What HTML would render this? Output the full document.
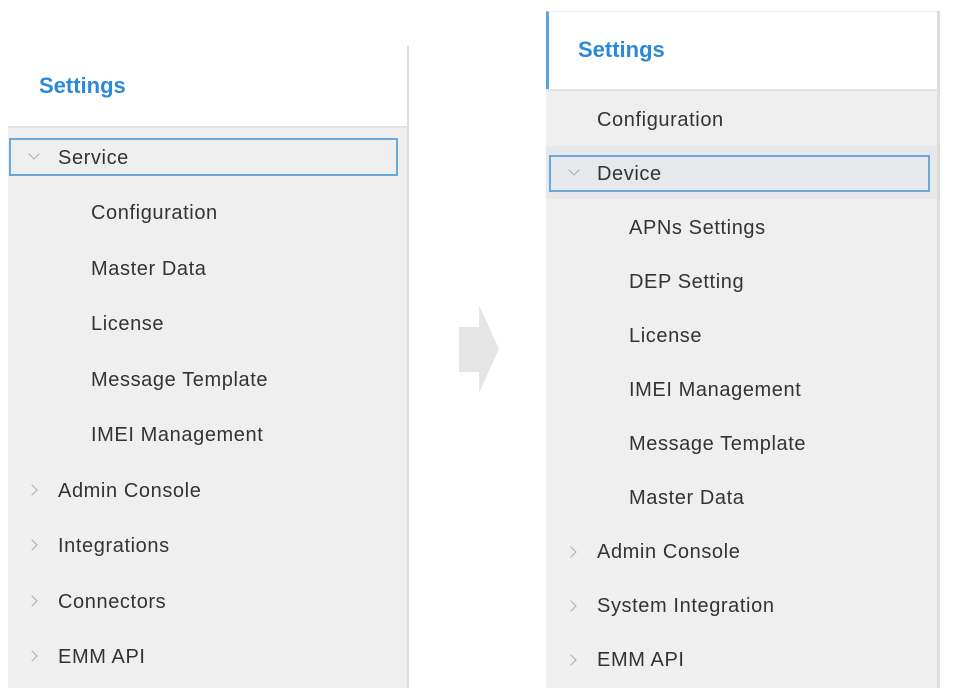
<!DOCTYPE html>
<html><head><meta charset="utf-8"><style>
body{margin:0;width:953px;height:699px;background:#fff;position:relative;overflow:hidden;font-family:"Liberation Sans",sans-serif;}
.a{position:absolute;}
.t{position:absolute;font-size:20px;color:#333;line-height:24px;white-space:nowrap;letter-spacing:0.6px;margin-top:1px;}
.h{position:absolute;font-size:22px;font-weight:bold;color:#2b8ad8;}
.ch{position:absolute;width:7px;height:7px;border-right:1.3px solid #aaa;border-bottom:1.3px solid #aaa;}
.r{transform:rotate(-45deg);}
.d{transform:rotate(45deg);}
</style></head><body>
<div class="a" style="left:8px;top:46px;width:400px;height:80px;background:#fff;"></div>
<div class="a" style="left:407px;top:46px;width:2px;height:642px;background:#ddd;"></div>
<div class="a" style="left:8px;top:126px;width:399px;height:562px;background:#efefef;border-top:2px solid #e2e2e2;box-sizing:border-box;"></div>
<div class="h" style="left:39px;top:73px;">Settings</div>
<div class="a" style="left:9px;top:138px;width:389px;height:38px;border:2px solid #6aa8dd;box-sizing:border-box;"></div>
<div class="ch d" style="left:30px;top:150px;"></div>
<div class="t" style="left:58px;top:145px;">Service</div>
<div class="t" style="left:91px;top:200px;">Configuration</div>
<div class="t" style="left:91px;top:256px;">Master Data</div>
<div class="t" style="left:91px;top:311px;">License</div>
<div class="t" style="left:91px;top:367px;">Message Template</div>
<div class="t" style="left:91px;top:422px;">IMEI Management</div>
<div class="ch r" style="left:28px;top:486px;"></div>
<div class="t" style="left:58px;top:478px;">Admin Console</div>
<div class="ch r" style="left:28px;top:541px;"></div>
<div class="t" style="left:58px;top:533px;">Integrations</div>
<div class="ch r" style="left:28px;top:597px;"></div>
<div class="t" style="left:58px;top:589px;">Connectors</div>
<div class="ch r" style="left:28px;top:652px;"></div>
<div class="t" style="left:58px;top:644px;">EMM API</div>
<svg class="a" style="left:455px;top:300px;" width="50" height="100"><polygon points="4,27 24,27 24,5 44,49 24,93 24,72 4,72" fill="#e6e6e6"/></svg>
<div class="a" style="left:546px;top:11px;width:392px;height:79px;background:#fff;border-top:1px solid #eee;border-left:3px solid #5aa2e0;box-sizing:border-box;"></div>
<div class="a" style="left:937px;top:11px;width:3px;height:677px;background:#ddd;"></div>
<div class="a" style="left:546px;top:89px;width:391px;height:599px;background:#efefef;border-top:2px solid #e2e2e2;box-sizing:border-box;"></div>
<div class="h" style="left:578px;top:37px;">Settings</div>
<div class="t" style="left:597px;top:107px;">Configuration</div>
<div class="a" style="left:546px;top:146px;width:391px;height:53px;background:#e6e8eb;"></div>
<div class="a" style="left:549px;top:155px;width:381px;height:37px;border:2px solid #6aa8dd;box-sizing:border-box;"></div>
<div class="ch d" style="left:570px;top:166px;"></div>
<div class="t" style="left:597px;top:161px;">Device</div>
<div class="t" style="left:629px;top:215px;">APNs Settings</div>
<div class="t" style="left:629px;top:269px;">DEP Setting</div>
<div class="t" style="left:629px;top:323px;">License</div>
<div class="t" style="left:629px;top:377px;">IMEI Management</div>
<div class="t" style="left:629px;top:431px;">Message Template</div>
<div class="t" style="left:629px;top:485px;">Master Data</div>
<div class="ch r" style="left:567px;top:548px;"></div>
<div class="t" style="left:597px;top:539px;">Admin Console</div>
<div class="ch r" style="left:567px;top:602px;"></div>
<div class="t" style="left:597px;top:593px;">System Integration</div>
<div class="ch r" style="left:567px;top:656px;"></div>
<div class="t" style="left:597px;top:647px;">EMM API</div>
</body></html>
